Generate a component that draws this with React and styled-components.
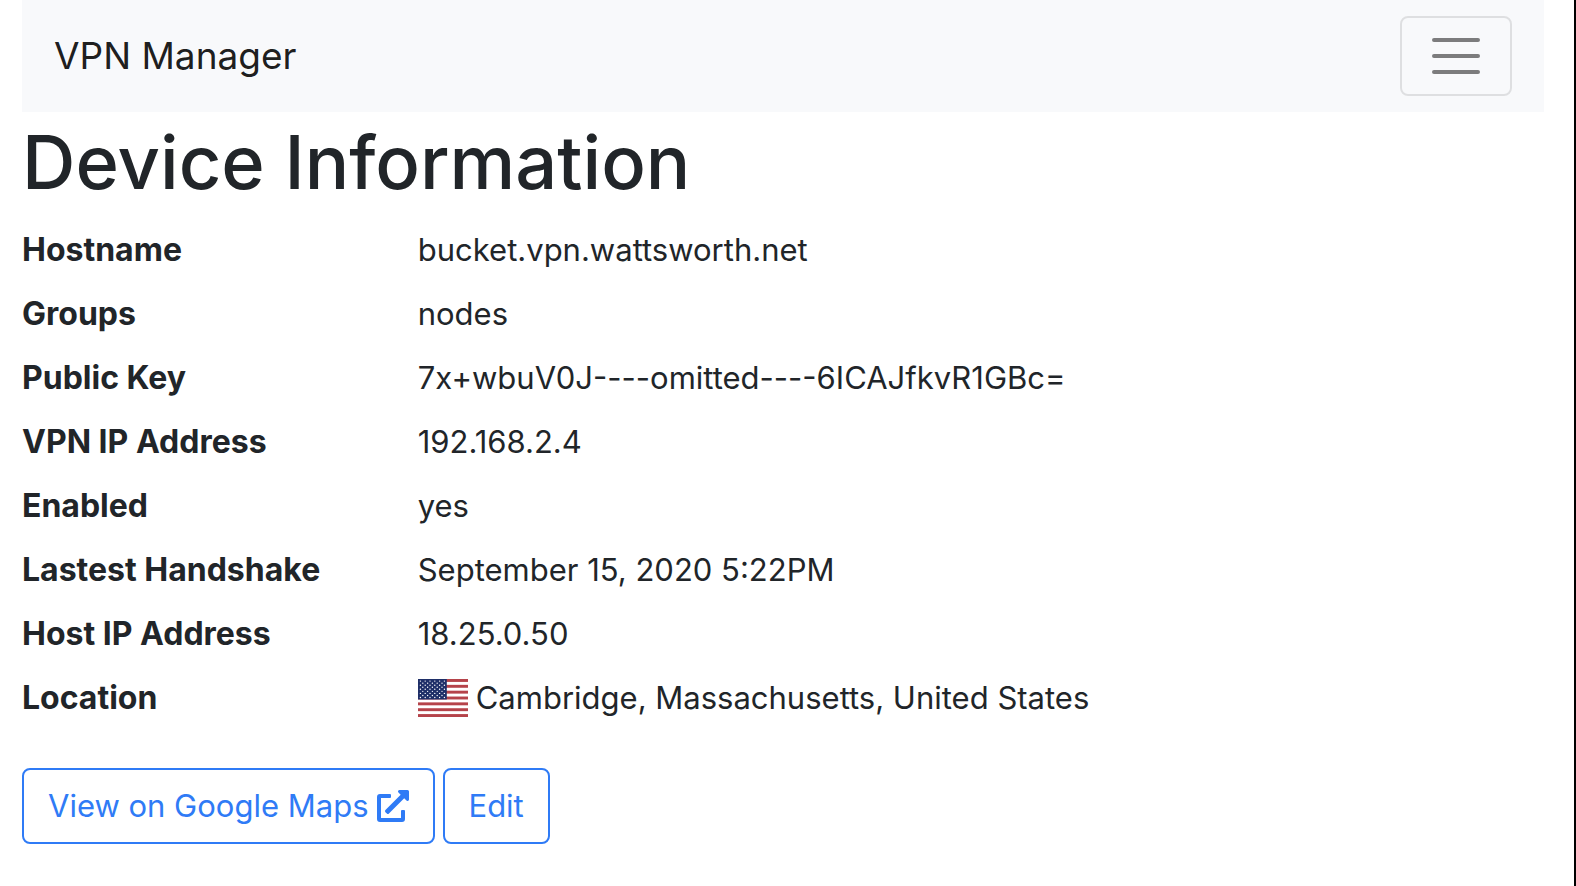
import React from "react";
import styled, { createGlobalStyle } from "styled-components";
import { FaExternalLinkAlt } from "react-icons/fa";

const Global = createGlobalStyle`
  *, *::before, *::after { box-sizing: border-box; }
  body {
    margin: 0;
    background: #fff;
    color: #212529;
    font-family: Inter, "Liberation Sans", sans-serif;
    font-size: 31px;
    line-height: 48px;
  }
`;
const Page = styled.div`
  min-height: 100vh;
  padding: 0 30px 0 22px;
  border-right: 2px solid #000;
`;
const Navbar = styled.nav`
  display: flex;
  align-items: center;
  justify-content: space-between;
  padding: 16px 32px;
  background: #f8f9fb;
`;
const Brand = styled.a`
  color: rgba(0, 0, 0, 0.9);
  font-size: 37px;
  line-height: 60px;
  text-decoration: none;
`;
const Toggler = styled.button`
  display: flex;
  align-items: center;
  justify-content: center;
  width: 112px;
  height: 80px;
  padding: 0;
  border: 2px solid rgba(0, 0, 0, 0.1);
  border-radius: 8px;
  background: transparent;
`;
const Title = styled.h1`
  margin: 2px 0 16px;
  font-size: 74px;
  font-weight: 500;
  line-height: 96px;
`;
const Details = styled.dl`
  display: grid;
  grid-template-columns: 26% 1fr;
  row-gap: 16px;
  margin: 0 0 46px;
`;
const Term = styled.dt`
  font-size: 32px;
  font-weight: 700;
`;
const Value = styled.dd`
  display: flex;
  align-items: center;
  gap: 8px;
  margin: 0;
`;
const FlagImage = styled.svg`
  flex: none;
  width: 50px;
  height: 38px;
`;
const Actions = styled.div`
  display: flex;
  gap: 8px;
`;
const ActionLink = styled.a`
  display: flex;
  align-items: center;
  gap: 8px;
  padding: 12px 24px;
  border: 2px solid #2f7bf6;
  border-radius: 8px;
  color: #2f7bf6;
  text-decoration: none;
`;

const details = [
  ["Hostname", "bucket.vpn.wattsworth.net"],
  ["Groups", "nodes"],
  ["Public Key", "7x+wbuV0J----omitted----6ICAJfkvR1GBc="],
  ["VPN IP Address", "192.168.2.4"],
  ["Enabled", "yes"],
  ["Lastest Handshake", "September 15, 2020 5:22PM"],
  ["Host IP Address", "18.25.0.50"],
];

const stripes = [0, 2, 4, 6, 8, 10, 12];
const stars = Array.from({ length: 9 }, (_, row) =>
  Array.from({ length: row % 2 ? 5 : 6 }, (_, column) => ({
    x: 2.4 + column * 4.8 + (row % 2 ? 2.4 : 0),
    y: 2.1 + row * 2.05,
  }))
).flat();

function UsFlag() {
  return (
    <FlagImage viewBox="0 0 50 38" role="img" aria-label="United States flag">
      <rect width="50" height="38" fill="#fff" />
      {stripes.map((n) => (
        <rect key={n} y={(n * 38) / 13} width="50" height={38 / 13} fill="#b5434a" />
      ))}
      <rect width="28.8" height={(38 * 7) / 13} fill="#1f2f68" />
      {stars.map(({ x, y }) => (
        <circle key={`${x}-${y}`} cx={x} cy={y} r="0.7" fill="#fff" />
      ))}
    </FlagImage>
  );
}

export default function App() {
  return (
    <>
      <Global />
      <Page>
        <Navbar>
          <Brand href="#">VPN Manager</Brand>
          <Toggler type="button" aria-label="Toggle navigation">
            <svg width="60" height="60" viewBox="0 0 30 30" stroke="rgba(0,0,0,0.5)" strokeWidth="2" strokeLinecap="round">
              <path d="M4 7h22M4 15h22M4 23h22" />
            </svg>
          </Toggler>
        </Navbar>
        <Title>Device Information</Title>
        <Details>
          {details.map(([term, value]) => (
            <React.Fragment key={term}>
              <Term>{term}</Term>
              <Value>{value}</Value>
            </React.Fragment>
          ))}
          <Term>Location</Term>
          <Value><UsFlag />Cambridge, Massachusetts, United States</Value>
        </Details>
        <Actions>
          <ActionLink href="#map">View on Google Maps <FaExternalLinkAlt size={32} /></ActionLink>
          <ActionLink href="#edit">Edit</ActionLink>
        </Actions>
      </Page>
    </>
  );
}
